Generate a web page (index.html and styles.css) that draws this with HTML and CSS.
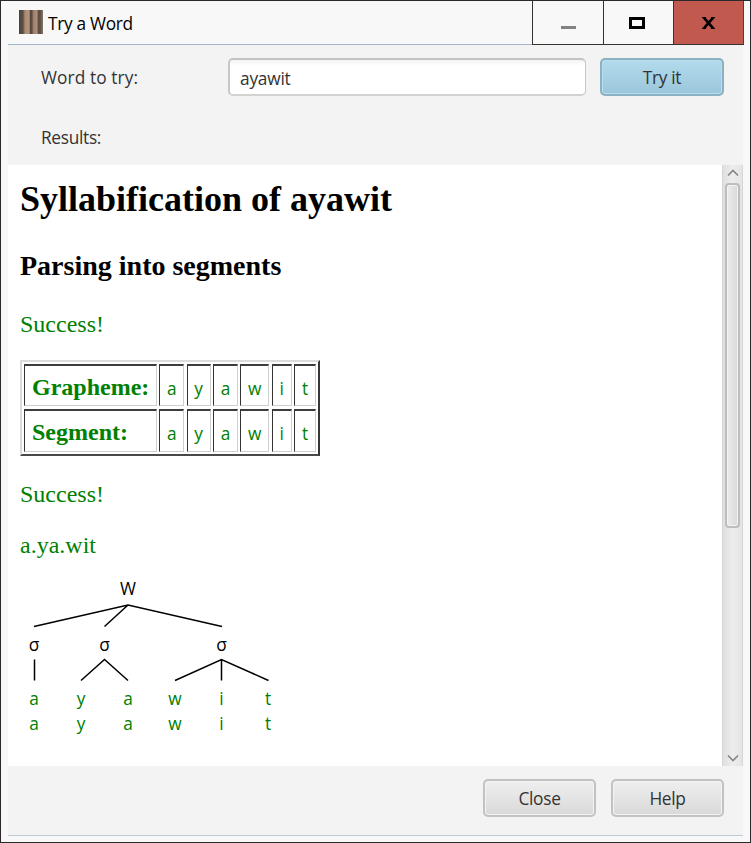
FILE: index.html
```html
<!DOCTYPE html>
<html lang="en">
<head>
<meta charset="utf-8">
<title>Try a Word</title>
<link rel="stylesheet" href="styles.css">
</head>
<body>
<div class="window">
  <header class="titlebar">
    <div class="caption">
      <svg class="app-icon" width="24" height="24" viewBox="0 0 24 24">
        <defs><linearGradient id="bark">
          <stop offset="0" stop-color="#4a433b"/><stop offset=".17" stop-color="#5c5045"/>
          <stop offset=".25" stop-color="#a88b74"/><stop offset=".42" stop-color="#b5937b"/>
          <stop offset=".48" stop-color="#54483f"/><stop offset=".54" stop-color="#5b4e46"/>
          <stop offset=".6" stop-color="#a0806b"/><stop offset=".75" stop-color="#b08e77"/>
          <stop offset=".8" stop-color="#5d5046"/><stop offset=".88" stop-color="#5a5047"/>
          <stop offset="1" stop-color="#8b7664"/>
        </linearGradient></defs>
        <path fill="url(#bark)" d="M0 0h24v24H0z"/>
      </svg>
      <span class="title">Try a Word</span>
    </div>
    <div class="controls">
      <div class="control"><svg width="15" height="3"><path fill="#828282" d="M0 0h15v3H0z"/></svg></div>
      <div class="control max"><svg width="16" height="12"><path fill="none" stroke="#000" stroke-width="3" d="M1.5 1.5h13v9h-13z"/></svg></div>
      <div class="control exit"><svg width="13" height="12" viewBox="0 0 13 12"><path fill="none" stroke="#000" stroke-width="2.6" d="M2 .8l9 10.4M11 .8L2 11.2"/><path stroke="#000" stroke-width="1.3" d="M0 .7h4M9 .7h4M0 11.3h4M9 11.3h4"/></svg></div>
    </div>
  </header>
  <section class="form">
    <label class="word-label" for="word">Word to try:</label>
    <input class="word" id="word" type="text" value="ayawit">
    <button class="button primary">Try it</button>
    <div class="results-label">Results:</div>
  </section>
  <main class="viewer">
    <div class="page">
      <h1>Syllabification of ayawit</h1>
      <h2>Parsing into segments</h2>
      <p class="first">Success!</p>
      <div class="segments">
        <b>Grapheme:</b><span>a</span><span>y</span><span>a</span><span>w</span><span>i</span><span>t</span>
        <b>Segment:</b><span>a</span><span>y</span><span>a</span><span>w</span><span>i</span><span>t</span>
      </div>
      <p class="second">Success!</p>
      <p class="syllables">a.ya.wit</p>
      <svg class="tree" width="270" height="166" viewBox="20 574 270 166">
        <path class="branch" d="M34 626.5L128 605L222 626.5M128 605L104.5 626.5M34.5 659.5V680.5M81 680.5L104.5 659.5L128 680.5M175 680.5L221.5 659.5L268.5 680.5M221.5 659.5V680.5"/>
        <g class="node"><text x="128" y="595">W</text><text x="34" y="651">σ</text><text x="104.5" y="651">σ</text><text x="221.5" y="651">σ</text></g>
        <g class="leaf"><text x="34" y="705">a</text><text x="81" y="705">y</text><text x="128" y="705">a</text><text x="175" y="705">w</text><text x="221.5" y="705">i</text><text x="268" y="705">t</text>
        <text x="34" y="730">a</text><text x="81" y="730">y</text><text x="128" y="730">a</text><text x="175" y="730">w</text><text x="221.5" y="730">i</text><text x="268" y="730">t</text></g>
      </svg>
    </div>
    <div class="scrollbar">
      <svg width="12" height="8"><path class="arrow" d="M1 6.5L6 1.5L11 6.5"/></svg>
      <div class="thumb"></div>
      <svg class="down" width="12" height="8"><path class="arrow" d="M1 1.5L6 6.5L11 1.5"/></svg>
    </div>
  </main>
  <footer class="actions">
    <button class="button">Close</button>
    <button class="button">Help</button>
  </footer>
</div>
</body>
</html>
```
FILE: styles.css
```css
* { box-sizing: border-box; }
body { margin: 0; font: 17.3px/24px "Open Sans", "Noto Sans", sans-serif; color: #333; }
.window { width: 751px; height: 843px; border: 1px solid #2b292e; padding: 0 7px; background: #f8f8f8; display: flex; flex-direction: column; }
.titlebar { height: 44px; flex: none; display: flex; justify-content: space-between; margin-right: -1px; }
.caption { flex: 1; display: flex; padding: 9px 0 0 11px; gap: 5px; height: 44px; border-bottom: 1px solid #a3b5cc; }
.title { color: #000; letter-spacing: -.3px; line-height: 27px; }
.controls { display: flex; border-left: 1px solid #333; border-bottom: 1px solid #333; }
.control { width: 71px; display: flex; align-items: flex-end; justify-content: center; padding-bottom: 15px; border-right: 1px solid #333; }
.max { width: 70px; padding: 0 4px 15px 0; }
.exit { width: 70px; background: #c1594e; border-color: #5c3734; }
.form { height: 120px; flex: none; background: #f3f3f3; display: grid; grid-template-columns: 187px 357px 124px; column-gap: 0; grid-template-rows: 38px 60px; padding: 13px 0 0 33px; align-items: center; letter-spacing: -.3px; }
.word-label { padding-top: 2px; letter-spacing: .1px; }
.word { width: 358px; height: 38px; font: inherit; letter-spacing: -.2px; color: #333; padding: 2px 10px 0; border: 2px solid; border-width: 2px 1px 2px 2px; border-color: #c2c2c2 #c7c7c7 #d2d2d2; border-radius: 5px; background: linear-gradient(#f3f3f3, #fff 6px); }
.button { height: 38px; width: 113px; padding: 1px 0 0; font: inherit; letter-spacing: -.3px; color: #333; border: 2px solid #c2c2c2; border-radius: 5px; background: linear-gradient(#efefef, #d9d9d9); box-shadow: inset 0 0 0 1px #f3f3f3; }
.primary { width: 124px; margin-left: 15px; border-color: #8bb1c3; background: linear-gradient(#b2dced, #9bc5da); box-shadow: inset 0 0 0 1px #b6deee; }
.results-label { grid-column: 1; padding-top: 24px; }
.viewer { height: 601px; flex: none; display: flex; background: #fff; }
.page { flex: 1; padding: 13px 12px 0; font-family: "Liberation Serif", serif; font-size: 24px; color: #000; }
h1 { font-size: 36px; line-height: 42px; margin: 0; white-space: nowrap; }
h2 { font-size: 28px; line-height: 32px; margin: 30px 0 0; }
p { line-height: 28px; margin: 0; color: #008000; }
.first { margin-top: 28px; }
.second { margin-top: 24px; }
.syllables { margin-top: 23px; }
.segments { width: 300px; height: 96px; margin-top: 22px; padding: 2px; display: grid; grid-template-columns: 133px 25px 24px 25px 29px 20px 22px; grid-template-rows: 42px 43px; justify-content: space-between; align-content: space-between; border: 2px solid; border-color: #dcdcdc #373737 #494949 #dcdcdc; color: #008000; }
.segments > * { display: flex; align-items: center; justify-content: center; border: 1px solid; border-color: #3d3d3d #cfcfcf #cfcfcf #333; border-width: 2px 1px 1px 1px; }
.segments b { justify-content: flex-start; padding: 2px 0 0 7px; }
.segments span { font: 17.3px "Open Sans", sans-serif; padding-top: 5px; }
.tree { display: block; margin-top: 15px; font: 17.3px "Open Sans", "Noto Sans", sans-serif; text-anchor: middle; }
.branch { fill: none; stroke: #000; stroke-width: 1.5px; }
.node { fill: #000; }
.leaf { fill: #008000; }
.scrollbar { width: 21px; display: flex; flex-direction: column; align-items: center; padding: 4px 0; border: 1px solid #d6d6d6; border-width: 0 1px; background: linear-gradient(90deg, #dfdfdf, #ededed 50%, #e4e4e4); }
.thumb { width: 15px; height: 345px; margin-top: 6px; border: 2px solid #bdbdbd; border-radius: 4px; background: linear-gradient(90deg, #ececec, #d9d9d9); box-shadow: inset 0 0 0 1px #f4f4f4; }
.down { margin-top: auto; }
.arrow { fill: none; stroke: #858585; stroke-width: 1.6px; }
.actions { flex: none; height: 70px; display: flex; justify-content: flex-end; gap: 15px; padding: 13px 19px 0 0; background: #f3f3f3; border-bottom: 1px solid #bfcbd8; }
```
